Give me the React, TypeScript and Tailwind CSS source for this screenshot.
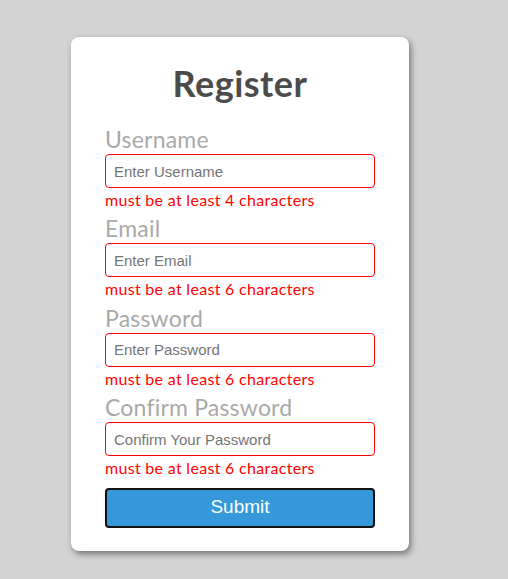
const fields = [
	{ label: 'Username', placeholder: 'Enter Username', error: 'must be at least 4 characters', type: 'text' },
	{ label: 'Email', placeholder: 'Enter Email', error: 'must be at least 6 characters', type: 'email' },
	{ label: 'Password', placeholder: 'Enter Password', error: 'must be at least 6 characters', type: 'password' },
	{
		label: 'Confirm Password',
		placeholder: 'Confirm Your Password',
		error: 'must be at least 6 characters',
		type: 'password',
	},
];

const comic = "font-['Comic_Sans_MS','Lato',cursive]";

function App() {
	return (
		<div className="min-h-[579px] w-full bg-[#d3d3d3] pt-[37px] pl-[71px]">
			<form
				className={`w-[338px] rounded-[8px] bg-white px-[34px] pt-[28px] pb-[23px] shadow-[2px_3px_6px_rgba(0,0,0,0.45)] ${comic}`}
				onSubmit={(e) => e.preventDefault()}
			>
				<h1 className="mb-[24px] h-[40px] text-center text-[36px] leading-[36px] font-bold tracking-[0.5px] text-[#4b4b4b]">
					Register
				</h1>
				{fields.map((f) => (
					<div key={f.label} className="mb-[10.4px] flex flex-col">
						<label className="h-[25px] text-[23px] leading-[20px] tracking-[0.2px] text-[#a9a9a9]">
							{f.label}
						</label>
						<input
							type={f.type}
							placeholder={f.placeholder}
							className="h-[34px] w-full rounded-[4px] border border-[#ff0000] px-[8px] font-['Liberation_Sans',Arial,sans-serif] text-[15px] text-black outline-none placeholder:text-[#757575]"
						/>
						<span className="h-[20px] pt-[2px] text-[16px] leading-[20px] tracking-[0.3px] text-[#ff0000]">
							{f.error}
						</span>
					</div>
				))}
				<button
					type="submit"
					className="mt-[1px] h-[40px] w-full rounded-[4px] border-2 border-[#111] bg-[#3498db] font-['Liberation_Sans',Arial,sans-serif] text-[19px] text-white"
				>
					Submit
				</button>
			</form>
		</div>
	);
}

export default App;
